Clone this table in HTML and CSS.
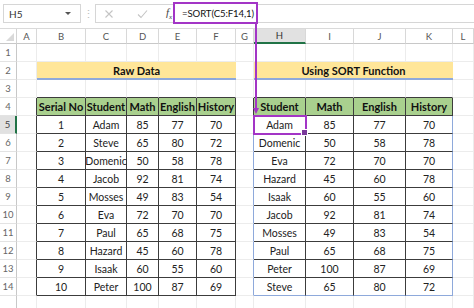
FILE: index.html
```html
<!DOCTYPE html>
<html>
<head>
<meta charset="utf-8">
<link rel="stylesheet" href="styles.css">
</head>
<body>
<div class="app">
  <div class="fbar">
    <div class="namebox"><span class="nb-text">H5</span><span class="dd"></span></div>
    <div class="dots">⋮</div>
    <div class="formula">
      <span class="ico">
        <svg width="10" height="10" viewBox="0 0 10 10"><path d="M1.5 1.5 L8.5 8.5 M8.5 1.5 L1.5 8.5" stroke="#c4c4c4" stroke-width="1.1" fill="none"/></svg>
      </span>
      <span class="ico">
        <svg width="11" height="10" viewBox="0 0 11 10"><path d="M1 5.5 L4 8.5 L10 1.5" stroke="#c4c4c4" stroke-width="1.1" fill="none"/></svg>
      </span>
      <span class="fx">f<sub>x</sub></span>
      <div class="ftext">=SORT(C5:F14,1)</div>
    </div>
  </div>

  <div class="sheet">
    <!-- column headers -->
    <div class="corner"><span class="tri"></span></div>
    <div class="ch">A</div><div class="ch">B</div><div class="ch">C</div><div class="ch">D</div><div class="ch">E</div><div class="ch">F</div><div class="ch">G</div><div class="ch sel">H</div><div class="ch">I</div><div class="ch">J</div><div class="ch">K</div><div class="ch">L</div>

    <!-- row 1 -->
    <div class="rh">1</div>
    <div class="c"></div><div class="c"></div><div class="c"></div><div class="c"></div><div class="c"></div><div class="c"></div><div class="c"></div><div class="c"></div><div class="c"></div><div class="c"></div><div class="c"></div><div class="c"></div>

    <!-- row 2 -->
    <div class="rh">2</div>
    <div class="c"></div>
    <div class="band span5">Raw Data</div>
    <div class="c"></div>
    <div class="band span4">Using SORT Function</div>
    <div class="c"></div>

    <!-- row 3 -->
    <div class="rh">3</div>
    <div class="c"></div>
    <div class="c tt"></div><div class="c tt"></div><div class="c tt"></div><div class="c tt"></div><div class="c tt"></div>
    <div class="c"></div>
    <div class="c tt"></div><div class="c tt"></div><div class="c tt"></div><div class="c tt"></div>
    <div class="c"></div>

    <!-- row 4 -->
    <div class="rh">4</div>
    <div class="c tl"></div>
    <div class="t h">Serial No</div><div class="t h">Student</div><div class="t h">Math</div><div class="t h">English</div><div class="t h">History</div>
    <div class="c tl"></div>
    <div class="t h">Student</div><div class="t h">Math</div><div class="t h">English</div><div class="t h">History</div>
    <div class="c"></div>

    <!-- row 5 -->
    <div class="rh sel">5</div>
    <div class="c tl"></div>
    <div class="t">1</div><div class="t">Adam</div><div class="t">85</div><div class="t">77</div><div class="t">70</div>
    <div class="c tb"></div>
    <div class="t r active">Adam</div><div class="t r">85</div><div class="t r">77</div><div class="t r rk">70</div>
    <div class="c"></div>

    <!-- row 6 -->
    <div class="rh">6</div>
    <div class="c tl"></div>
    <div class="t">2</div><div class="t">Steve</div><div class="t">65</div><div class="t">80</div><div class="t">72</div>
    <div class="c tb"></div>
    <div class="t r">Domenic</div><div class="t r">50</div><div class="t r">58</div><div class="t r rk">78</div>
    <div class="c"></div>

    <!-- row 7 -->
    <div class="rh">7</div>
    <div class="c tl"></div>
    <div class="t">3</div><div class="t">Domenic</div><div class="t">50</div><div class="t">58</div><div class="t">78</div>
    <div class="c tb"></div>
    <div class="t r">Eva</div><div class="t r">72</div><div class="t r">70</div><div class="t r rk">70</div>
    <div class="c"></div>

    <!-- row 8 -->
    <div class="rh">8</div>
    <div class="c tl"></div>
    <div class="t">4</div><div class="t">Jacob</div><div class="t">92</div><div class="t">81</div><div class="t">74</div>
    <div class="c tb"></div>
    <div class="t r">Hazard</div><div class="t r">45</div><div class="t r">60</div><div class="t r rk">78</div>
    <div class="c"></div>

    <!-- row 9 -->
    <div class="rh">9</div>
    <div class="c tl"></div>
    <div class="t">5</div><div class="t">Mosses</div><div class="t">49</div><div class="t">83</div><div class="t">54</div>
    <div class="c tb"></div>
    <div class="t r">Isaak</div><div class="t r">60</div><div class="t r">55</div><div class="t r rk">60</div>
    <div class="c"></div>

    <!-- row 10 -->
    <div class="rh">10</div>
    <div class="c tl"></div>
    <div class="t">6</div><div class="t">Eva</div><div class="t">72</div><div class="t">70</div><div class="t">70</div>
    <div class="c tb"></div>
    <div class="t r">Jacob</div><div class="t r">92</div><div class="t r">81</div><div class="t r rk">74</div>
    <div class="c"></div>

    <!-- row 11 -->
    <div class="rh">11</div>
    <div class="c tl"></div>
    <div class="t">7</div><div class="t">Paul</div><div class="t">65</div><div class="t">68</div><div class="t">75</div>
    <div class="c tb"></div>
    <div class="t r">Mosses</div><div class="t r">49</div><div class="t r">83</div><div class="t r rk">54</div>
    <div class="c"></div>

    <!-- row 12 -->
    <div class="rh">12</div>
    <div class="c tl"></div>
    <div class="t">8</div><div class="t">Hazard</div><div class="t">45</div><div class="t">60</div><div class="t">78</div>
    <div class="c tb"></div>
    <div class="t r">Paul</div><div class="t r">65</div><div class="t r">68</div><div class="t r rk">75</div>
    <div class="c"></div>

    <!-- row 13 -->
    <div class="rh">13</div>
    <div class="c tl"></div>
    <div class="t">9</div><div class="t">Isaak</div><div class="t">60</div><div class="t">55</div><div class="t">60</div>
    <div class="c tb"></div>
    <div class="t r">Peter</div><div class="t r">100</div><div class="t r">87</div><div class="t r rk">69</div>
    <div class="c"></div>

    <!-- row 14 -->
    <div class="rh">14</div>
    <div class="c tl"></div>
    <div class="t">10</div><div class="t">Peter</div><div class="t">100</div><div class="t">87</div><div class="t">69</div>
    <div class="c tb"></div>
    <div class="t r rb">Steve</div><div class="t r rb">65</div><div class="t r rb">80</div><div class="t r rk rb">72</div>
    <div class="c"></div>

    <!-- row 15 (cut off) -->
    <div class="rh"></div>
    <div class="c"></div><div class="c"></div><div class="c"></div><div class="c"></div><div class="c"></div><div class="c"></div><div class="c"></div><div class="c"></div><div class="c"></div><div class="c"></div><div class="c"></div><div class="c"></div>
  </div>

  <svg class="arrow" width="8" height="94" viewBox="0 0 8 94">
    <path d="M4 0 L4 88" stroke="#a335c6" stroke-width="2" fill="none"/>
    <path d="M1 86 L7 86 L4 92 Z" fill="#a335c6"/>
  </svg>
</div>
</body>
</html>
```

FILE: styles.css
```css
* { box-sizing: border-box; }
html, body { margin: 0; padding: 0; background: #fff; }
body { width: 474px; height: 308px; overflow: hidden; font-family: Lato, "Open Sans", sans-serif; }

.app { position: relative; width: 474px; height: 308px; overflow: hidden; }

/* formula bar */
.fbar { height: 28px; display: flex; align-items: flex-start; padding-top: 4px; padding-left: 3px; }
.namebox {
  width: 78px; height: 19px; border: 1px solid #d6d6d6; display: flex; align-items: center;
  padding-left: 5px; font-size: 10px; color: #333;
}
.nb-text { flex: 1; }
.dd { width: 0; height: 0; border-left: 3px solid transparent; border-right: 3px solid transparent; border-top: 3px solid #555; margin-right: 9px; }
.dots { width: 14px; text-align: center; color: #bdbdbd; font-size: 11px; line-height: 19px; }
.formula {
  flex: 1; height: 19px; border: 1px solid #d6d6d6; border-right: none; display: flex; align-items: center;
  padding-left: 8px; position: relative;
}
.ico { width: 27px; display: flex; justify-content: center; }
.ico:first-child { width: 12px; justify-content: flex-start; margin-right: 13px; }
.fx { font-family: "Liberation Serif", serif; font-style: italic; font-size: 11px; color: #444; margin-left: 10px; width: 15px; }
.fx sub { font-size: 7px; }
.ftext {
  position: absolute; left: 77px; top: -3px; width: 85px; height: 22px;
  border: 2px solid #a335c6; font-size: 9.6px; color: #111; display: flex; align-items: center; padding-left: 7px;
  background: #fff; white-space: nowrap; letter-spacing: -0.1px;
}

/* sheet */
.sheet {
  display: grid;
  grid-template-columns: 17px 20px 49px 41px 32px 38px 39px 18px 52px 48px 52px 47px 1fr;
  grid-template-rows: 15px repeat(15, 18px);
  border-top: 1px solid #dadada;
  font-size: 10.5px;
  color: #222;
}
.corner { border-right: 1px solid #d4d4d4; border-bottom: 1px solid #c8c8c8; position: relative; }
.tri { position: absolute; right: 2px; bottom: 2px; width: 0; height: 0; border-left: 8px solid transparent; border-bottom: 8px solid #d9d9d9; }
.ch {
  border-right: 1px solid #d8d8d8; border-bottom: 1px solid #c8c8c8; display: flex; align-items: center; justify-content: center;
  font-size: 9.5px; color: #555;
}
.ch.sel { background: #e1e1e1; border-bottom: 2px solid #217346; color: #333; }
.rh {
  border-right: 1px solid #c8c8c8; border-bottom: 1px solid #e3e3e3; display: flex; align-items: center; justify-content: center;
  font-size: 9.5px; color: #666;
}
.rh.sel { background: #e1e1e1; border-right: 2px solid #217346; color: #444; }

.c { border-right: 1px solid #ececec; border-bottom: 1px solid #ececec; }
.c.tt { border-bottom-color: #3c3c3c; }
.c.tl { border-right-color: #3c3c3c; }
.c.tb { border-right-color: #8ea9db; }

.band {
  background: #ffe699; border-bottom: 2px solid #8ea9db; display: flex; align-items: center; justify-content: center;
  font-weight: 700; font-size: 11px; color: #111;
}
.span5 { grid-column: span 5; }
.span4 { grid-column: span 4; }

.t {
  border-right: 1px solid #3c3c3c; border-bottom: 1px solid #3c3c3c; display: flex; align-items: center; justify-content: center;
  font-size: 10.5px; color: #222;
}
.t.h { background: #a9d08e; font-weight: 700; font-size: 11px; color: #111; }
.t.rk { border-right-color: #8ea9db; }
.t.rb { border-bottom-color: #8ea9db; }
.t.active { position: relative; outline: 2px solid #a335c6; outline-offset: -1px; }
.t.active::after {
  content: ""; position: absolute; right: -3px; bottom: -3px; width: 5px; height: 5px; background: #7a3a9a; border: 1px solid #fff;
}

.arrow { position: absolute; left: 252px; top: 22px; }
```
